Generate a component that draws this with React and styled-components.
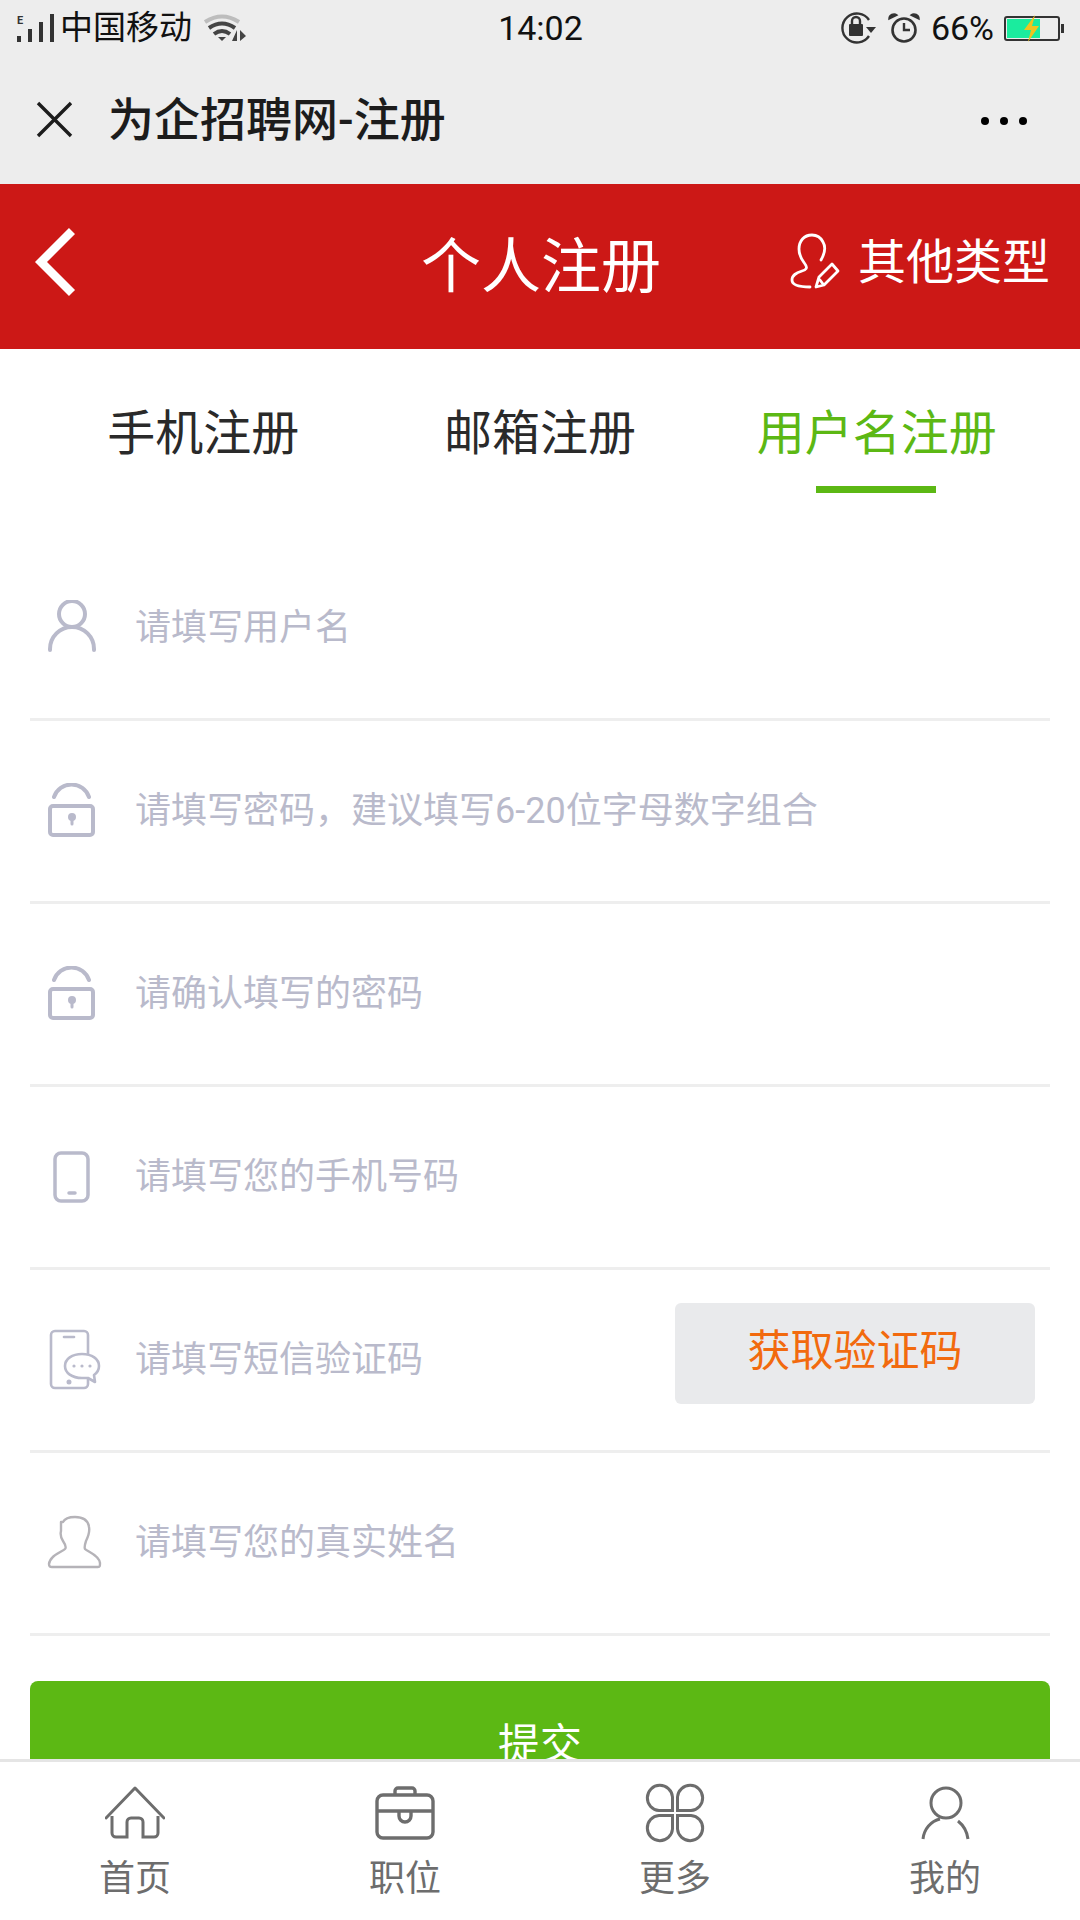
import React from "react";
import styled, { createGlobalStyle } from "styled-components";

const GlobalStyle = createGlobalStyle`
  html, body {
    margin: 0;
    padding: 0;
    background: #fff;
  }
  * {
    box-sizing: border-box;
  }
`;

const Page = styled.div`
  position: relative;
  width: 1080px;
  height: 1920px;
  overflow: hidden;
  background: #fff;
  font-family: Roboto, "Noto Sans CJK SC", sans-serif;
`;

const StatusBar = styled.div`
  display: grid;
  grid-template-columns: 1fr auto 1fr;
  align-items: center;
  height: 52px;
  padding: 4px 16px 0 17px;
  background: #ededed;
  color: #111;
  font-size: 34px;
`;

const StatusLeft = styled.div`
  display: flex;
  align-items: center;
`;

const Carrier = styled.span`
  margin: 0 11px 0 6px;
  font-size: 33px;
  line-height: 40px;
`;

const StatusRight = styled.div`
  display: flex;
  align-items: center;
  justify-content: flex-end;
`;

const Percent = styled.span`
  margin: 0 10px 0 11px;
  line-height: 40px;
`;

const Clock = styled.span`
  line-height: 40px;
`;

const TitleBar = styled.div`
  display: flex;
  align-items: center;
  height: 132px;
  padding: 0 53px 0 36px;
  background: #ededed;
  color: #1c1c1c;
`;

const Title = styled.h1`
  margin: 0 0 4px 35px;
  font-size: 46px;
  font-weight: 500;
`;

const Dots = styled.svg`
  margin: 6px 0 0 auto;
`;

const Header = styled.header`
  display: grid;
  grid-template-columns: 1fr auto 1fr;
  align-items: center;
  height: 165px;
  padding: 0 30px 10px 32px;
  background: #cc1816;
  color: #fff;
`;

const HeaderTitle = styled.div`
  font-size: 60px;
`;

const OtherTypes = styled.div`
  display: flex;
  align-items: center;
  justify-content: flex-end;
  gap: 18px;
  font-size: 48px;
`;

const OtherLabel = styled.span`
  margin-bottom: 8px;
`;

const Tabs = styled.nav`
  display: grid;
  grid-template-columns: repeat(3, 1fr);
  padding: 0 35px;
`;

const Tab = styled.div`
  display: flex;
  flex-direction: column;
  align-items: center;
  height: 144px;
  padding-top: 58px;
  font-size: 48px;
  line-height: 54px;
  color: ${(p) => (p.$active ? "#5cb814" : "#2a2a2a")};

  &::after {
    content: "";
    width: 120px;
    height: 7px;
    margin-top: auto;
    transform: translateX(-1px);
    background: ${(p) => (p.$active ? "#5cb814" : "transparent")};
  }
`;

const Form = styled.form`
  display: flex;
  flex-direction: column;
  margin: 45px 30px 0;
`;

const Row = styled.div`
  display: flex;
  align-items: center;
  height: 183px;
  border-bottom: 3px solid #eeeeee;
`;

const IconSlot = styled.div`
  display: flex;
  justify-content: center;
  width: 84px;
  margin-right: 21px;
`;

const Placeholder = styled.span`
  margin-bottom: 8px;
  font-size: 36px;
  color: #b9bacb;
`;

const CodeButton = styled.div`
  display: flex;
  align-items: center;
  justify-content: center;
  align-self: flex-start;
  width: 360px;
  height: 101px;
  margin: 33px 15px 0 auto;
  padding-bottom: 14px;
  border-radius: 6px;
  background: #e9eaec;
  color: #f26a0e;
  font-size: 43px;
`;

const Submit = styled.div`
  display: flex;
  align-items: center;
  justify-content: center;
  height: 124px;
  margin-top: 45px;
  padding-bottom: 6px;
  border-radius: 8px;
  background: #5cb814;
  color: #fff;
  font-size: 42px;
`;

const BottomNav = styled.nav`
  position: fixed;
  left: 0;
  bottom: 0;
  display: grid;
  grid-template-columns: repeat(4, 1fr);
  width: 1080px;
  height: 161px;
  padding-top: 21px;
  border-top: 3px solid #e5e5e5;
  background: #fff;
`;

const NavItem = styled.div`
  display: flex;
  flex-direction: column;
  align-items: center;
`;

const NavIcon = styled.div`
  display: flex;
  align-items: center;
  justify-content: center;
  height: 60px;
`;

const NavLabel = styled.span`
  margin-top: 16px;
  font-size: 36px;
  line-height: 40px;
  color: #6d6d6d;
`;

const iconColor = "#b9bacb";

const UserIcon = () => (
  <svg width="50" height="56" viewBox="0 0 50 56" fill="none" stroke={iconColor} strokeWidth="4" strokeLinecap="round">
    <circle cx="25" cy="14" r="13" />
    <path d="M3 50v-1a22 22 0 0 1 44 0v1" />
  </svg>
);

const LockIcon = () => (
  <svg width="50" height="56" viewBox="0 0 50 56" fill="none" stroke={iconColor} strokeWidth="4" strokeLinecap="round">
    <rect x="3" y="23" width="43" height="29" rx="3" />
    <path d="M7 14A18.500 18.500 0 0 1 42 14" />
    <circle cx="25" cy="34" r="3" fill={iconColor} strokeWidth="2" />
    <path d="M25 35v6" strokeWidth="3" />
  </svg>
);

const PhoneIcon = () => (
  <svg width="50" height="56" viewBox="0 0 50 56" fill="none" stroke={iconColor} strokeWidth="3.500" strokeLinecap="round">
    <rect x="8" y="4" width="33" height="48" rx="6" />
    <path d="M22 44h6" />
  </svg>
);

const SmsIcon = () => (
  <svg width="56" height="64" viewBox="0 0 56 64" fill="none" stroke={iconColor} strokeWidth="2.600" strokeLinecap="round" strokeLinejoin="round" style={{ marginLeft: 5, marginBottom: 2 }}>
    <rect x="4" y="4" width="37" height="57" rx="4" />
    <path d="M17 10h10" />
    <circle cx="22" cy="55" r="1.200" fill={iconColor} />
    <path d="M35 51c-10 0-17-5-17-12s7-12 17-12 17 5 17 12c0 4-2 7-5 9l1 7-7-4z" fill="#fff" />
    <circle cx="27" cy="39" r="1.600" fill={iconColor} stroke="none" />
    <circle cx="35" cy="39" r="1.600" fill={iconColor} stroke="none" />
    <circle cx="43" cy="39" r="1.600" fill={iconColor} stroke="none" />
  </svg>
);

const AvatarIcon = () => (
  <svg width="56" height="56" viewBox="0 0 56 56" fill="none" stroke="#b5b3b8" strokeWidth="2.400" strokeLinejoin="round" style={{ marginLeft: 5 }}>
    <path d="M16 7C18 3 24 2 28 2c8 0 13 3 14 10 1 5-1 10-3 14-1 3-2 6-1 8 3 3 14 6 15 14 0 3 0 4-2 4H5c-2 0-3-1-3-3 1-9 13-12 16-15 2-2 0-5-2-8-2-3-3-6-2-10 0-3 0-6 0-9z" />
  </svg>
);

const formRows = [
  { text: "请填写用户名", icon: <UserIcon /> },
  { text: "请填写密码，建议填写6-20位字母数字组合", icon: <LockIcon /> },
  { text: "请确认填写的密码", icon: <LockIcon /> },
  { text: "请填写您的手机号码", icon: <PhoneIcon /> },
  { text: "请填写短信验证码", icon: <SmsIcon />, code: true },
  { text: "请填写您的真实姓名", icon: <AvatarIcon /> },
];

const navColor = "#6d6d6d";

const Petal = ({ transform }) => <path transform={transform} d="M27 27.500H14A12.600 12.600 0 1 1 27.500 14V27.500z" />;

const navItems = [
  {
    label: "首页",
    icon: (
      <svg width="60" height="54" viewBox="0 0 60 54" fill="none" stroke={navColor} strokeWidth="3">
        <path d="M1 32L30 2l29 30" strokeLinecap="round" strokeLinejoin="round" />
        <path d="M7 30v17a4 4 0 0 0 4 4h11V36a4 4 0 0 1 4-4h8a4 4 0 0 1 4 4v15h11a4 4 0 0 0 4-4V30" />
      </svg>
    ),
  },
  {
    label: "职位",
    icon: (
      <svg width="60" height="54" viewBox="0 0 60 54" fill="none" stroke={navColor} strokeWidth="3.400">
        <rect x="2" y="9" width="56" height="43" rx="6" />
        <path d="M20 9V5a3 3 0 0 1 3-3h14a3 3 0 0 1 3 3v4M2 25h56M24 25v5a6 6 0 0 0 12 0v-5" />
      </svg>
    ),
  },
  {
    label: "更多",
    icon: (
      <svg width="60" height="60" viewBox="0 0 60 60" fill="none" stroke={navColor} strokeWidth="3">
        <Petal />
        <Petal transform="translate(60 0) scale(-1 1)" />
        <Petal transform="translate(0 60) scale(1 -1)" />
        <Petal transform="translate(60 60) scale(-1 -1)" />
      </svg>
    ),
  },
  {
    label: "我的",
    icon: (
      <svg width="49" height="54" viewBox="0 0 49 54" fill="none" stroke={navColor} strokeWidth="3">
        <circle cx="25" cy="17" r="15" />
        <path d="M2 53C3 43 10 35 19 33M47 53C46 45 42 39 37 35" />
      </svg>
    ),
  },
];

function App() {
  return (
    <Page>
      <GlobalStyle />
      <StatusBar>
        <StatusLeft>
          <svg width="37" height="28" viewBox="0 0 37 28" fill="#333">
            <text x="0" y="10" fontSize="11" fontWeight="700" fontFamily="Roboto, sans-serif">E</text>
            <rect x="0" y="22" width="4" height="6" />
            <rect x="11" y="15" width="4" height="13" />
            <rect x="22" y="8" width="4" height="20" />
            <rect x="33" y="0" width="4" height="28" />
          </svg>
          <Carrier>中国移动</Carrier>
          <svg width="43" height="28" viewBox="0 0 43 28" fill="none">
            <path d="M2 8Q19 -3 36 8" stroke="#bdbdbd" strokeWidth="4" />
            <path d="M6 14Q19 5 32 14" stroke="#444" strokeWidth="4" />
            <path d="M11 20Q19 14 27 20" stroke="#444" strokeWidth="4" />
            <path d="M15 23h8l-4 4zM34 16v11h-5zM37 16l6 6-6 5z" fill="#444" />
          </svg>
        </StatusLeft>
        <Clock>14:02</Clock>
        <StatusRight>
          <svg width="36" height="34" viewBox="0 0 36 34" fill="none">
            <path d="M29 9A14.500 14.500 0 1 0 29 25" stroke="#333" strokeWidth="2.400" />
            <path d="M26 16h10l-5 6z" fill="#333" />
            <rect x="9" y="13" width="14" height="12" rx="1" fill="#333" />
            <path d="M12 13v-3a4 4 0 0 1 8 0v3" stroke="#333" strokeWidth="2.400" />
          </svg>
          <svg width="32" height="30" viewBox="0 0 32 30" fill="none" style={{ marginLeft: 12 }}>
            <circle cx="16" cy="17" r="11.500" stroke="#333" strokeWidth="2.600" />
            <path d="M16 10v7h6" stroke="#333" strokeWidth="2.400" />
            <path d="M1 6a5 5 0 0 1 8-4zM31 6a5 5 0 0 0-8-4z" fill="#333" stroke="#333" strokeWidth="1.500" />
          </svg>
          <Percent>66%</Percent>
          <svg width="60" height="27" viewBox="0 0 60 27" fill="none">
            <rect x="1" y="2" width="54" height="23" rx="2" stroke="#333" strokeWidth="2" />
            <rect x="3" y="4" width="33" height="19" fill="#1aec9e" />
            <rect x="57" y="9" width="3" height="9" fill="#333" />
            <path d="M31 0L20 15h7l-3 12 11-16h-7z" fill="#efc41e" />
          </svg>
        </StatusRight>
      </StatusBar>

      <TitleBar>
        <svg width="37" height="37" viewBox="0 0 37 37" stroke="#1c1c1c" strokeWidth="3.400" style={{ marginTop: 2 }}>
          <path d="M2 2l33 33M35 2L2 35" />
        </svg>
        <Title>为企招聘网-注册</Title>
        <Dots width="46" height="8" viewBox="0 0 46 8" fill="#000">
          <circle cx="4" cy="4" r="4" />
          <circle cx="23" cy="4" r="4" />
          <circle cx="42" cy="4" r="4" />
        </Dots>
      </TitleBar>

      <Header>
        <svg width="44" height="70" viewBox="0 0 44 70" fill="none" stroke="#fff" strokeWidth="8.500">
          <path d="M40 4L9 35l31 31" />
        </svg>
        <HeaderTitle>个人注册</HeaderTitle>
        <OtherTypes>
          <svg width="50" height="57" viewBox="0 0 50 57" fill="none" stroke="#fff" strokeWidth="2.800" strokeLinecap="round" strokeLinejoin="round">
            <path d="M31 27C35 20 36 14 33 9 30 3 26 2 22 2 14 2 9 8 9 16 9 24 13 28 15 31 18 35 16 37 12 38 6 40 2 42 2 47 2 52 8 54 20 54" />
            <path d="M42 31l6 7-14 14-8 2 3-10zM30 47l3 4" />
          </svg>
          <OtherLabel>其他类型</OtherLabel>
        </OtherTypes>
      </Header>

      <Tabs>
        <Tab>手机注册</Tab>
        <Tab>邮箱注册</Tab>
        <Tab $active>用户名注册</Tab>
      </Tabs>

      <Form>
        {formRows.map((row) => (
          <Row key={row.text}>
            <IconSlot>{row.icon}</IconSlot>
            <Placeholder>{row.text}</Placeholder>
            {row.code && <CodeButton>获取验证码</CodeButton>}
          </Row>
        ))}
        <Submit>提交</Submit>
      </Form>

      <BottomNav>
        {navItems.map((item) => (
          <NavItem key={item.label}>
            <NavIcon>{item.icon}</NavIcon>
            <NavLabel>{item.label}</NavLabel>
          </NavItem>
        ))}
      </BottomNav>
    </Page>
  );
}

export default App;
